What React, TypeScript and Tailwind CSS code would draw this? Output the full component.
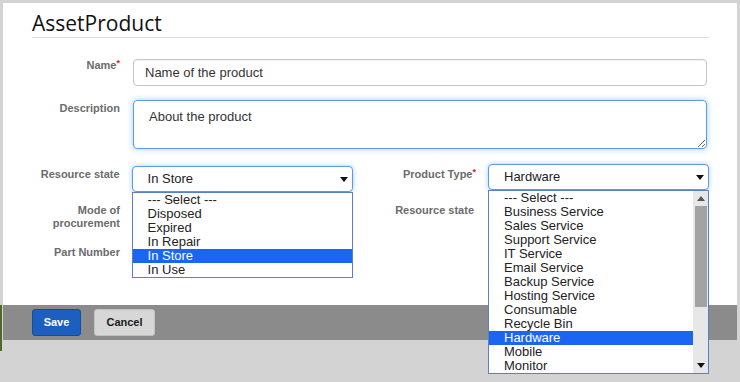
import React from "react";

const stateOptions = ["--- Select ---", "Disposed", "Expired", "In Repair", "In Store", "In Use"];

const typeOptions = [
  "--- Select ---",
  "Business Service",
  "Sales Service",
  "Support Service",
  "IT Service",
  "Email Service",
  "Backup Service",
  "Hosting Service",
  "Consumable",
  "Recycle Bin",
  "Hardware",
  "Mobile",
  "Monitor",
];

const Label = ({
  children,
  required,
  className = "",
}: {
  children: React.ReactNode;
  required?: boolean;
  className?: string;
}) => (
  <div
    className={
      "text-right text-[11px] leading-[13px] font-bold text-[#6b6b6b] " + className
    }
  >
    {children}
    {required && <span className="text-[#e01b1b] text-[9px] align-top leading-[9px]">*</span>}
  </div>
);

const Caret = ({ up }: { up?: boolean }) => (
  <svg width="8" height="5" viewBox="0 0 8 5">
    <path d={up ? "M0 5h8L4 0z" : "M0 0h8L4 5z"} fill={up ? "#555" : "#111"} />
  </svg>
);

const SelectBox = ({
  value,
  options,
  selected,
  scroll,
}: {
  value: string;
  options: string[];
  selected: string;
  scroll?: boolean;
}) => (
  <div className="relative w-[221px]">
    <div className="h-[26px] flex items-center justify-between pl-[15px] pr-[4px] bg-white border border-[#5d9be0] rounded-[4px] shadow-[0_0_5px_rgba(102,175,233,0.6)] text-[13px] text-[#222]">
      <span>{value}</span>
      <Caret />
    </div>
    {/* open option list */}
    <div className="absolute left-0 top-full w-full z-20 bg-white border border-[#5b7fc6] flex">
      <div className="flex-1">
        {options.map((opt) => (
          <div
            key={opt}
            className={
              opt === selected
                ? "h-[14px] leading-[14px] text-[13px] pl-[15px] bg-[#1a66f2] text-white"
                : "h-[14px] leading-[14px] text-[13px] pl-[15px] text-[#222]"
            }
          >
            {opt}
          </div>
        ))}
      </div>
      {scroll && (
        <div className="w-[15px] bg-[#e7e7e7] flex flex-col items-center">
          <div className="h-[15px] flex items-center justify-center">
            <Caret up />
          </div>
          <div className="w-[12px] h-[101px] bg-[#a3a3a3]" />
          <div className="flex-1" />
          <div className="h-[15px] flex items-center justify-center">
            <Caret />
          </div>
        </div>
      )}
    </div>
  </div>
);

const App = () => {
  return (
    <div className="w-[740px] h-[382px] bg-[#d3d3d3] overflow-hidden font-['Liberation_Sans',Arial,sans-serif]">
      <div className="pt-[3px] pl-[3px] pr-[3px]">
        <div className="bg-white h-[302px] pt-[6px] pl-[29px] pr-[28px]">
          <h1 className="h-[29px] leading-[28px] border-b border-[#dcdcdc] text-[21px] text-[#111] font-['Open_Sans',sans-serif]">
            AssetProduct
          </h1>

          {/* Name */}
          <div className="flex items-start gap-[12px] mt-[21px]">
            <Label required className="w-[88px]">
              Name
            </Label>
            <input
              readOnly
              value="Name of the product"
              className="ml-[1px] mr-[2px] flex-1 h-[27px] px-[11px] border border-[#c6c6c6] rounded-[4px] text-[13px] text-[#333] outline-none shadow-[inset_0_1px_1px_rgba(0,0,0,0.06)]"
            />
          </div>

          {/* Description */}
          <div className="flex items-start gap-[12px] mt-[14px]">
            <Label className="w-[88px] pt-[2px]">Description</Label>
            <textarea
              readOnly
              value="About the product"
              className="ml-[1px] mr-[2px] flex-1 h-[49px] pl-[15px] pt-[8px] border border-[#5d9be0] rounded-[4px] text-[13px] leading-[15px] text-[#333] outline-none shadow-[0_0_6px_rgba(102,175,233,0.6)]"
            />
          </div>

          {/* Resource state / Product type */}
          <div className="flex items-start mt-[17px]">
            <Label className="w-[88px] pt-[2px]">Resource state</Label>
            <div className="ml-[12px]">
              <SelectBox value="In Store" options={stateOptions} selected="In Store" />
            </div>
            <Label required className="w-[124px] pt-[2px]">
              Product Type
            </Label>
            <div className="ml-[12px] -mt-[2px]">
              <SelectBox value="Hardware" options={typeOptions} selected="Hardware" scroll />
            </div>
          </div>

          {/* Mode of procurement / Resource state */}
          <div className="flex items-start mt-[12px]">
            <Label className="w-[88px] leading-[12px]">
              Mode of
              <br />
              procurement
            </Label>
            <div className="w-[233px]" />
            <Label className="w-[121px]">Resource state</Label>
          </div>

          {/* Part Number */}
          <div className="flex items-start mt-[16px]">
            <Label className="w-[88px]">Part Number</Label>
          </div>
        </div>
      </div>

      {/* footer bar */}
      <div className="flex items-start">
        <div className="w-[2px] h-[46px] bg-[#52682f]" />
        <div className="w-[1px]" />
        <div className="flex-1 mr-[3px] h-[35px] bg-[#8b8b8b] pl-[29px] pt-[4px] flex items-start gap-[13px]">
          <button className="w-[49px] h-[27px] rounded-[3px] bg-[#1c5fbf] border border-[#154d9e] text-white text-[11px] font-bold">
            Save
          </button>
          <button className="w-[61px] h-[27px] rounded-[3px] bg-[#d7d7d7] border border-[#c2c2c2] text-[#1b1b1b] text-[11px] font-bold">
            Cancel
          </button>
        </div>
      </div>
    </div>
  );
};

export default App;
